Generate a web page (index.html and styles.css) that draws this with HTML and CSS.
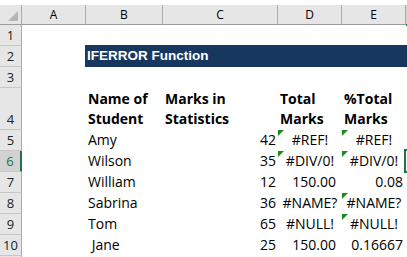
FILE: index.html
```html
<!DOCTYPE html>
<html>
<head>
<meta charset="utf-8">
<link rel="stylesheet" href="styles.css">
</head>
<body>
<div class="sheet">
  <div class="row colhdr">
    <div class="corner"><span class="corner-tri"></span></div>
    <div class="ch">A</div>
    <div class="ch">B</div>
    <div class="ch">C</div>
    <div class="ch">D</div>
    <div class="ch">E</div>
    <div class="ch sel"></div>
  </div>

  <div class="row">
    <div class="rh">1</div>
    <div class="c"></div><div class="c"></div><div class="c"></div><div class="c"></div><div class="c"></div><div class="c"></div>
  </div>

  <div class="row">
    <div class="rh">2</div>
    <div class="c"></div>
    <div class="band">IFERROR Function</div>
  </div>

  <div class="row">
    <div class="rh">3</div>
    <div class="c"></div><div class="c"></div><div class="c"></div><div class="c"></div><div class="c"></div><div class="c"></div>
  </div>

  <div class="row tall">
    <div class="rh">4</div>
    <div class="c"></div>
    <div class="c b">Name of<br>Student</div>
    <div class="c b">Marks in<br>Statistics</div>
    <div class="c b">Total<br>Marks</div>
    <div class="c b">%Total<br>Marks</div>
    <div class="c"></div>
  </div>

  <div class="row">
    <div class="rh">5</div>
    <div class="c"></div>
    <div class="c">Amy</div>
    <div class="c num">42</div>
    <div class="c err tri">#REF!</div>
    <div class="c err tri">#REF!</div>
    <div class="c"></div>
  </div>

  <div class="row">
    <div class="rh active">6</div>
    <div class="c"></div>
    <div class="c">Wilson</div>
    <div class="c num">35</div>
    <div class="c err tri">#DIV/0!</div>
    <div class="c err tri">#DIV/0!</div>
    <div class="c selcell"></div>
  </div>

  <div class="row">
    <div class="rh">7</div>
    <div class="c"></div>
    <div class="c">William</div>
    <div class="c num">12</div>
    <div class="c num d">150.00</div>
    <div class="c num e">0.08</div>
    <div class="c"></div>
  </div>

  <div class="row">
    <div class="rh">8</div>
    <div class="c"></div>
    <div class="c">Sabrina</div>
    <div class="c num">36</div>
    <div class="c err">#NAME?</div>
    <div class="c err tri">#NAME?</div>
    <div class="c"></div>
  </div>

  <div class="row">
    <div class="rh">9</div>
    <div class="c"></div>
    <div class="c">Tom</div>
    <div class="c num">65</div>
    <div class="c err">#NULL!</div>
    <div class="c err tri">#NULL!</div>
    <div class="c"></div>
  </div>

  <div class="row">
    <div class="rh">10</div>
    <div class="c"></div>
    <div class="c">&nbsp;Jane</div>
    <div class="c num">25</div>
    <div class="c num d">150.00</div>
    <div class="c num e">0.16667</div>
    <div class="c"></div>
  </div>

  <div class="row stub">
    <div class="rh"></div>
    <div class="c"></div><div class="c"></div><div class="c"></div><div class="c"></div><div class="c"></div><div class="c"></div>
  </div>
</div>
</body>
</html>
```

FILE: styles.css
```css
html, body {
  margin: 0;
  padding: 0;
  background: #ffffff;
}
body {
  width: 407px;
  height: 257px;
  overflow: hidden;
  font-family: "Open Sans", "Liberation Sans", sans-serif;
  font-size: 14px;
  color: #000000;
}
.sheet {
  display: flex;
  flex-direction: column;
  width: 407px;
  height: 257px;
  overflow: hidden;
}
.row {
  display: grid;
  grid-template-columns: 22px 64px 77px 115px 64px 64px 1fr;
  height: 21px;
  flex: none;
}
.row.tall {
  height: 42px;
}
.row.stub {
  height: 2px;
}
.colhdr {
  margin-top: 5px;
  height: 20px;
}
.corner {
  background: #e6e6e6;
  border-right: 1px solid #ababab;
  border-bottom: 1px solid #9b9b9b;
  position: relative;
}
.corner-tri {
  position: absolute;
  right: 3px;
  bottom: 3px;
  width: 0;
  height: 0;
  border-left: 10px solid transparent;
  border-bottom: 10px solid #b4b4b4;
}
.ch {
  background: #e6e6e6;
  border-right: 1px solid #ababab;
  border-bottom: 1px solid #9b9b9b;
  display: flex;
  align-items: center;
  justify-content: center;
  font-size: 12px;
  line-height: 19px;
  color: #000;
}
.ch.sel {
  background: #d2d2d2;
  border-right: none;
  border-bottom: 2px solid #217346;
  margin-bottom: -1px;
}
.rh {
  background: #e6e6e6;
  border-right: 1px solid #ababab;
  border-bottom: 1px solid #c6c6c6;
  display: flex;
  align-items: flex-end;
  justify-content: center;
  font-size: 13px;
  line-height: 19px;
  color: #222;
}
.stub .rh {
  border-bottom: none;
}
.rh.active {
  background: #d2d2d2;
  border-right: 2px solid #217346;
  color: #217346;
}
.c {
  display: flex;
  align-items: flex-end;
  padding: 0 0 1px 2px;
  line-height: 20px;
  white-space: nowrap;
  position: relative;
}
.c.b {
  font-weight: 700;
}
.c.num {
  justify-content: flex-end;
  padding-left: 0;
  padding-right: 2px;
}
.c.num.d {
  padding-right: 6px;
}
.c.num.e {
  padding-right: 3px;
}
.c.err {
  justify-content: center;
  padding-left: 0;
}
.c.tri::before {
  content: "";
  position: absolute;
  left: 0;
  top: 0;
  width: 0;
  height: 0;
  border-top: 6px solid #1a8a1a;
  border-right: 6px solid transparent;
}
.c.selcell {
  overflow: visible;
}
.c.selcell::after {
  content: "";
  position: absolute;
  left: -2px;
  top: -2px;
  width: 20px;
  height: 20px;
  border: 2px solid #217346;
}
.band {
  grid-column: 3 / -1;
  margin-left: -1px;
  margin-top: -1px;
  height: 22px;
  background: #17375e;
  color: #ffffff;
  font-family: "Liberation Sans", Arial, sans-serif;
  font-weight: 700;
  font-size: 13.5px;
  line-height: 22px;
  padding-left: 2px;
  white-space: nowrap;
}
```
